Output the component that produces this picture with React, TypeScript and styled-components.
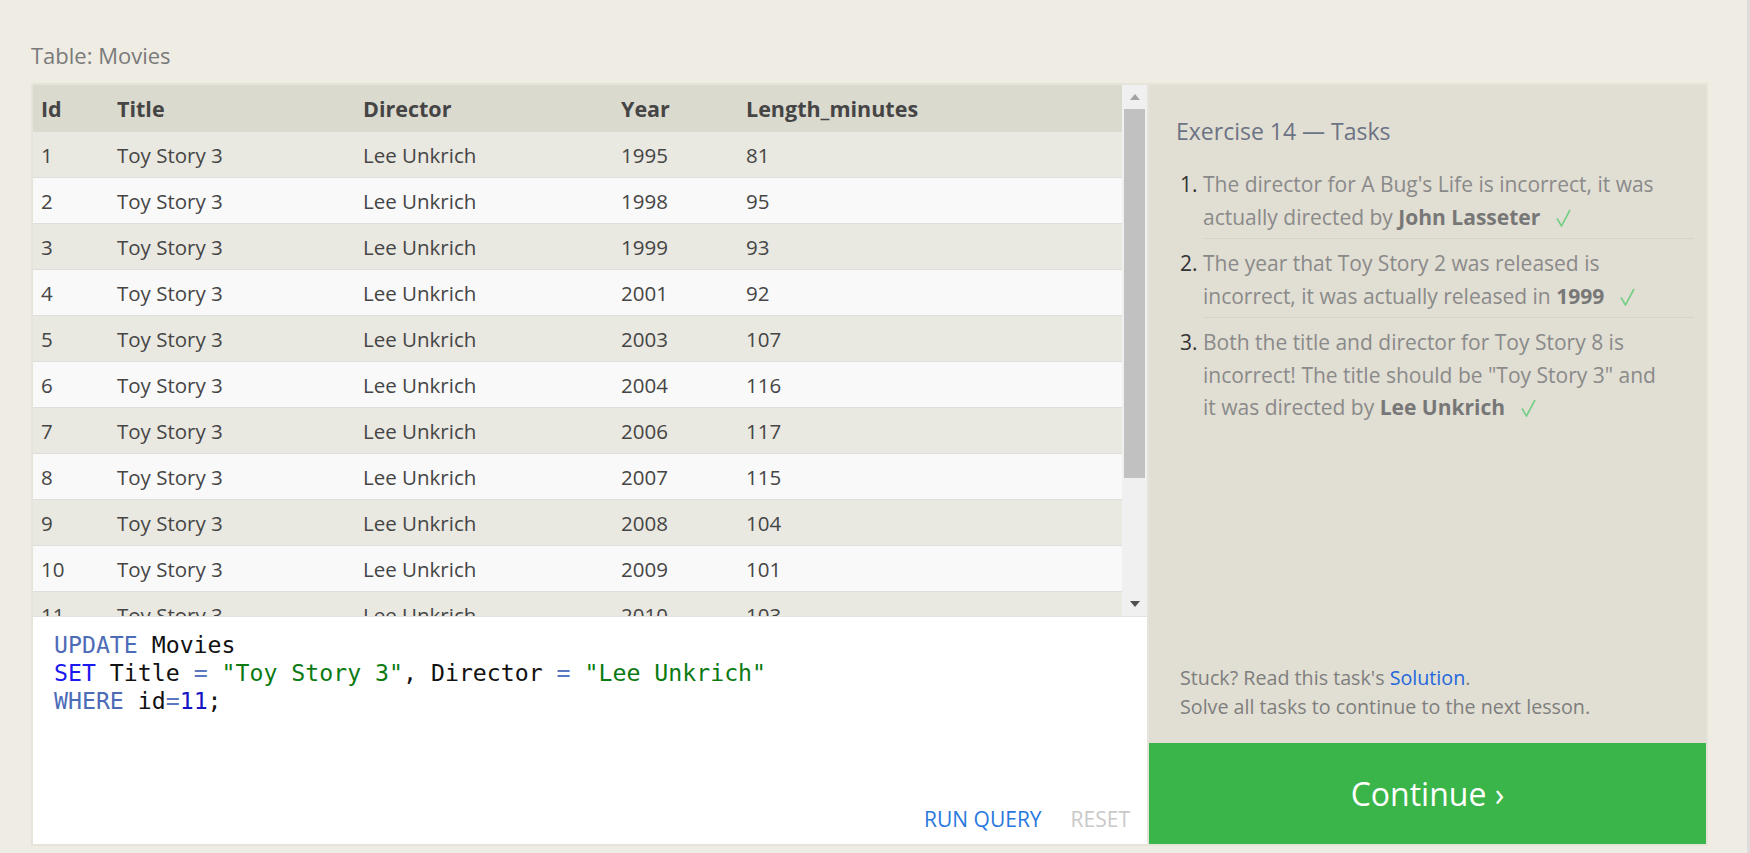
import React from "react";
import styled, { createGlobalStyle } from "styled-components";

const GlobalStyle = createGlobalStyle`
  html, body { margin: 0; padding: 0; background: #efece4; }
  body { font-family: "Open Sans", "Noto Sans", Arial, sans-serif; }
  * { box-sizing: border-box; }
`;

const Page = styled.div`
  display: flex;
  width: 1750px;
  height: 853px;
  overflow: hidden;
  background: #efece4;
`;

const Main = styled.main`
  flex: 1;
  padding: 40px 0 0 31px;
`;

const EdgeStrip = styled.div`
  width: 3px;
  background: #dddddd;
`;

const TableLabel = styled.div`
  font-size: 22px;
  line-height: 30px;
  color: #7a7a7a;
  margin-bottom: 13px;
`;

const Workspace = styled.div`
  display: grid;
  grid-template-columns: 1114px 557px;
  column-gap: 2px;
  width: 1677px;
  padding: 2px;
  background: #e5e3da;
`;

const LeftColumn = styled.section`
  display: flex;
  flex-direction: column;
`;

const TableFrame = styled.div`
  display: flex;
  height: 531px;
`;

const TableViewport = styled.div`
  flex: 1;
  overflow: hidden;
`;

const Row = styled.div<{ $variant: "head" | "odd" | "even" }>`
  display: grid;
  grid-template-columns: 76px 246px 258px 125px 1fr;
  align-items: center;
  height: ${(p) => (p.$variant === "head" ? "47px" : "46px")};
  background: ${(p) =>
    p.$variant === "head" ? "#dbdacf" : p.$variant === "odd" ? "#e9e8e1" : "#f9f9f9"};
  border-bottom: ${(p) => (p.$variant === "head" ? "none" : "1px solid #dedede")};
  font-size: ${(p) => (p.$variant === "head" ? "21.5px" : "20.5px")};
  font-weight: ${(p) => (p.$variant === "head" ? 700 : 400)};
  color: #454545;
`;

const Cell = styled.div`
  padding-left: 8px;
  white-space: nowrap;
`;

const Scrollbar = styled.div`
  width: 25px;
  display: flex;
  flex-direction: column;
  background: #f0f0f0;
`;

const ScrollButton = styled.div`
  height: 24px;
  display: flex;
  align-items: center;
  justify-content: center;
`;

const ScrollTrack = styled.div`
  flex: 1;
  padding: 0 2px;
`;

const ScrollThumb = styled.div`
  height: 369px;
  background: #c1c1c1;
`;

const Editor = styled.div`
  height: 228px;
  background: #ffffff;
  border-top: 1px solid #e3e3e3;
  display: flex;
  flex-direction: column;
`;

const Code = styled.pre`
  flex: 1;
  margin: 0;
  padding: 14px 0 0 21px;
  font-family: "DejaVu Sans Mono", "Liberation Mono", monospace;
  font-size: 23.2px;
  line-height: 28px;
  color: #111;
`;

const Tok = styled.span<{ $kind: "kw" | "set" | "str" | "op" | "num" }>`
  color: ${(p) =>
    ({ kw: "#4d6cb8", set: "#1a1aee", str: "#0b7a12", op: "#5a78c0", num: "#1414c4" })[p.$kind]};
`;

const ButtonBar = styled.div`
  display: flex;
  justify-content: flex-end;
  gap: 29px;
  padding: 0 17px 11px 0;
`;

const TextButton = styled.button<{ $muted?: boolean }>`
  border: none;
  background: none;
  padding: 0;
  font-family: "Open Sans", "Noto Sans", Arial, sans-serif;
  font-size: 21px;
  line-height: 28px;
  color: ${(p) => (p.$muted ? "#c9c9c9" : "#2a78de")};
  cursor: pointer;
`;

const RightColumn = styled.aside`
  display: flex;
  flex-direction: column;
`;

const TaskPanel = styled.div`
  flex: 1;
  display: flex;
  flex-direction: column;
  background: #e1ded3;
  padding: 31px 12px 22px 27px;
`;

const PanelTitle = styled.h2`
  margin: 0;
  font-size: 23px;
  font-weight: 400;
  line-height: 30px;
  color: #6c7384;
`;

const TaskList = styled.ol`
  list-style: none;
  margin: 14px 0 0 0;
  padding: 0 0 0 4px;
`;

const TaskItem = styled.li`
  display: flex;
  font-size: 21px;
  line-height: 32.5px;
`;

const TaskNum = styled.span`
  width: 23px;
  padding-top: 8px;
  color: #333;
`;

const TaskBody = styled.div<{ $last?: boolean }>`
  flex: 1;
  padding: 8px 0 5px;
  color: #8a8a8a;
  white-space: nowrap;
  border-bottom: ${(p) => (p.$last ? "none" : "1px solid #d6d3c8")};
`;

const Strong = styled.b`
  font-weight: 700;
  color: #777;
`;

const Check = styled.svg`
  margin-left: 16px;
  vertical-align: -2px;
`;

const CheckMark = () => (
  <Check width="15" height="18" viewBox="0 0 15 18">
    <path d="M1 9.5 L5.5 17 L14 1" fill="none" stroke="#74cf85" strokeWidth="1.6" />
  </Check>
);

const Spacer = styled.div`
  flex: 1;
`;

const Hint = styled.p`
  margin: 0 0 0 4px;
  font-size: 19.7px;
  line-height: 29px;
  color: #7e7e7e;
`;

const Link = styled.a`
  color: #2366dc;
  text-decoration: none;
`;

const ContinueButton = styled.button`
  height: 101px;
  border: none;
  background: #3ab54a;
  color: #ffffff;
  font-family: "Open Sans", "Noto Sans", Arial, sans-serif;
  font-size: 32px;
  cursor: pointer;
`;

const rows = [
  [1, 1995, 81],
  [2, 1998, 95],
  [3, 1999, 93],
  [4, 2001, 92],
  [5, 2003, 107],
  [6, 2004, 116],
  [7, 2006, 117],
  [8, 2007, 115],
  [9, 2008, 104],
  [10, 2009, 101],
  [11, 2010, 103],
  [12, 2011, 120],
  [13, 2012, 102],
  [14, 2013, 110],
];

const Arrow = ({ dir, color }: { dir: "up" | "down"; color: string }) => (
  <svg width="10" height="6" viewBox="0 0 10 6">
    <polygon points={dir === "up" ? "0,6 5,0 10,6" : "0,0 10,0 5,6"} fill={color} />
  </svg>
);

export default function App() {
  return (
    <Page>
      <GlobalStyle />
      <Main>
        <TableLabel>Table: Movies</TableLabel>
        <Workspace>
          <LeftColumn>
            <TableFrame>
              <TableViewport>
                <Row $variant="head">
                  <Cell>Id</Cell>
                  <Cell>Title</Cell>
                  <Cell>Director</Cell>
                  <Cell>Year</Cell>
                  <Cell>Length_minutes</Cell>
                </Row>
                {rows.map(([id, year, len], i) => (
                  <Row key={id} $variant={i % 2 === 0 ? "odd" : "even"}>
                    <Cell>{id}</Cell>
                    <Cell>Toy Story 3</Cell>
                    <Cell>Lee Unkrich</Cell>
                    <Cell>{year}</Cell>
                    <Cell>{len}</Cell>
                  </Row>
                ))}
              </TableViewport>
              <Scrollbar>
                <ScrollButton>
                  <Arrow dir="up" color="#a3a3a3" />
                </ScrollButton>
                <ScrollTrack>
                  <ScrollThumb />
                </ScrollTrack>
                <ScrollButton>
                  <Arrow dir="down" color="#505050" />
                </ScrollButton>
              </Scrollbar>
            </TableFrame>
            <Editor>
              <Code>
                <Tok $kind="kw">UPDATE</Tok> Movies{"\n"}
                <Tok $kind="set">SET</Tok> Title <Tok $kind="op">=</Tok>{" "}
                <Tok $kind="str">"Toy Story 3"</Tok>, Director <Tok $kind="op">=</Tok>{" "}
                <Tok $kind="str">"Lee Unkrich"</Tok>
                {"\n"}
                <Tok $kind="kw">WHERE</Tok> id<Tok $kind="op">=</Tok>
                <Tok $kind="num">11</Tok>;
              </Code>
              <ButtonBar>
                <TextButton>RUN QUERY</TextButton>
                <TextButton $muted>RESET</TextButton>
              </ButtonBar>
            </Editor>
          </LeftColumn>
          <RightColumn>
            <TaskPanel>
              <PanelTitle>Exercise 14 — Tasks</PanelTitle>
              <TaskList>
                <TaskItem>
                  <TaskNum>1.</TaskNum>
                  <TaskBody>
                    The director for A Bug's Life is incorrect, it was
                    <br />
                    actually directed by <Strong>John Lasseter</Strong>
                    <CheckMark />
                  </TaskBody>
                </TaskItem>
                <TaskItem>
                  <TaskNum>2.</TaskNum>
                  <TaskBody>
                    The year that Toy Story 2 was released is
                    <br />
                    incorrect, it was actually released in <Strong>1999</Strong>
                    <CheckMark />
                  </TaskBody>
                </TaskItem>
                <TaskItem>
                  <TaskNum>3.</TaskNum>
                  <TaskBody $last>
                    Both the title and director for Toy Story 8 is
                    <br />
                    incorrect! The title should be "Toy Story 3" and
                    <br />
                    it was directed by <Strong>Lee Unkrich</Strong>
                    <CheckMark />
                  </TaskBody>
                </TaskItem>
              </TaskList>
              <Spacer />
              <Hint>
                Stuck? Read this task's <Link href="#">Solution</Link>.
                <br />
                Solve all tasks to continue to the next lesson.
              </Hint>
            </TaskPanel>
            <ContinueButton>Continue ›</ContinueButton>
          </RightColumn>
        </Workspace>
      </Main>
      <EdgeStrip />
    </Page>
  );
}
